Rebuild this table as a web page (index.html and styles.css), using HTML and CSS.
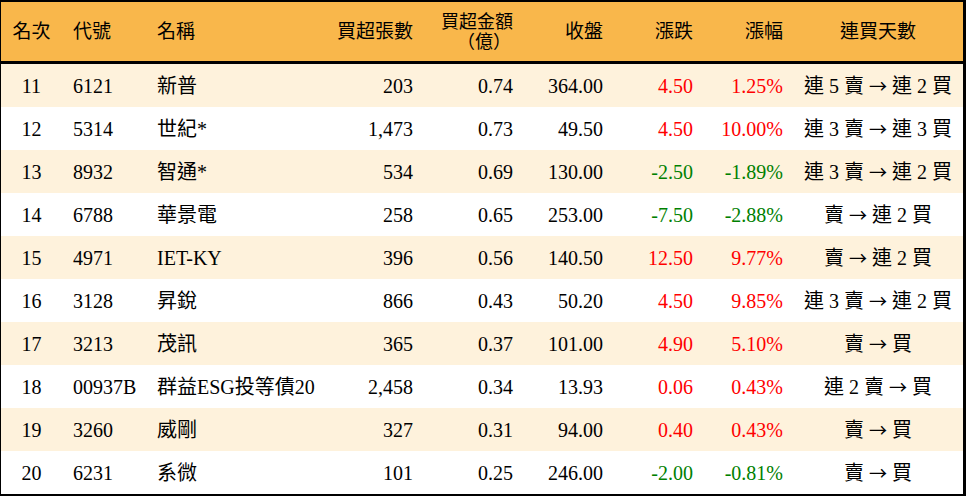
FILE: index.html
```html
<!DOCTYPE html>
<html lang="zh-Hant">
<head>
<meta charset="utf-8">
<title>買超排行</title>
<link rel="stylesheet" href="styles.css">
</head>
<body>
<div class="table">
  <div class="row head">
    <div class="cell center">名次</div>
    <div class="cell left">代號</div>
    <div class="cell left">名稱</div>
    <div class="cell right">買超張數</div>
    <div class="cell right two"><div class="line">買超金額</div><div class="line"><span class="paren open">（</span>億<span class="paren close">）</span></div></div>
    <div class="cell right">收盤</div>
    <div class="cell right">漲跌</div>
    <div class="cell right">漲幅</div>
    <div class="cell center">連買天數</div>
  </div>
  <div class="row odd">
    <div class="cell center">11</div><div class="cell left">6121</div><div class="cell left">新普</div>
    <div class="cell right">203</div><div class="cell right">0.74</div><div class="cell right">364.00</div>
    <div class="cell right up">4.50</div><div class="cell right up">1.25%</div>
    <div class="cell center days">連 5 賣 <span class="arrow">→</span> 連 2 買</div>
  </div>
  <div class="row">
    <div class="cell center">12</div><div class="cell left">5314</div><div class="cell left">世紀*</div>
    <div class="cell right">1,473</div><div class="cell right">0.73</div><div class="cell right">49.50</div>
    <div class="cell right up">4.50</div><div class="cell right up">10.00%</div>
    <div class="cell center days">連 3 賣 <span class="arrow">→</span> 連 3 買</div>
  </div>
  <div class="row odd">
    <div class="cell center">13</div><div class="cell left">8932</div><div class="cell left">智通*</div>
    <div class="cell right">534</div><div class="cell right">0.69</div><div class="cell right">130.00</div>
    <div class="cell right down">-2.50</div><div class="cell right down">-1.89%</div>
    <div class="cell center days">連 3 賣 <span class="arrow">→</span> 連 2 買</div>
  </div>
  <div class="row">
    <div class="cell center">14</div><div class="cell left">6788</div><div class="cell left">華景電</div>
    <div class="cell right">258</div><div class="cell right">0.65</div><div class="cell right">253.00</div>
    <div class="cell right down">-7.50</div><div class="cell right down">-2.88%</div>
    <div class="cell center days">賣 <span class="arrow">→</span> 連 2 買</div>
  </div>
  <div class="row odd">
    <div class="cell center">15</div><div class="cell left">4971</div><div class="cell left">IET-KY</div>
    <div class="cell right">396</div><div class="cell right">0.56</div><div class="cell right">140.50</div>
    <div class="cell right up">12.50</div><div class="cell right up">9.77%</div>
    <div class="cell center days">賣 <span class="arrow">→</span> 連 2 買</div>
  </div>
  <div class="row">
    <div class="cell center">16</div><div class="cell left">3128</div><div class="cell left">昇銳</div>
    <div class="cell right">866</div><div class="cell right">0.43</div><div class="cell right">50.20</div>
    <div class="cell right up">4.50</div><div class="cell right up">9.85%</div>
    <div class="cell center days">連 3 賣 <span class="arrow">→</span> 連 2 買</div>
  </div>
  <div class="row odd">
    <div class="cell center">17</div><div class="cell left">3213</div><div class="cell left">茂訊</div>
    <div class="cell right">365</div><div class="cell right">0.37</div><div class="cell right">101.00</div>
    <div class="cell right up">4.90</div><div class="cell right up">5.10%</div>
    <div class="cell center days">賣 <span class="arrow">→</span> 買</div>
  </div>
  <div class="row">
    <div class="cell center">18</div><div class="cell left">00937B</div><div class="cell left">群益ESG投等債20</div>
    <div class="cell right">2,458</div><div class="cell right">0.34</div><div class="cell right">13.93</div>
    <div class="cell right up">0.06</div><div class="cell right up">0.43%</div>
    <div class="cell center days">連 2 賣 <span class="arrow">→</span> 買</div>
  </div>
  <div class="row odd">
    <div class="cell center">19</div><div class="cell left">3260</div><div class="cell left">威剛</div>
    <div class="cell right">327</div><div class="cell right">0.31</div><div class="cell right">94.00</div>
    <div class="cell right up">0.40</div><div class="cell right up">0.43%</div>
    <div class="cell center days">賣 <span class="arrow">→</span> 買</div>
  </div>
  <div class="row">
    <div class="cell center">20</div><div class="cell left">6231</div><div class="cell left">系微</div>
    <div class="cell right">101</div><div class="cell right">0.25</div><div class="cell right">246.00</div>
    <div class="cell right down">-2.00</div><div class="cell right down">-0.81%</div>
    <div class="cell center days">賣 <span class="arrow">→</span> 買</div>
  </div>
</div>
</body>
</html>
```

FILE: styles.css
```css
html, body {
  margin: 0;
  padding: 0;
  background: #ffffff;
}

body {
  font-family: "Liberation Serif", "Noto Sans CJK TC", serif;
  font-size: 20px;
  color: #000000;
}

.table {
  width: 962px;
  border-top: 2px solid #000;
  border-left: 1px solid #000;
  border-right: 3px solid #000;
  border-bottom: 2px solid #000;
}

.row {
  display: grid;
  grid-template-columns: 61px 84px 184px 93px 100px 90px 90px 90px 170px;
  align-items: center;
  height: 43px;
  background: #ffffff;
}

.row.odd {
  background: #fef2dc;
}

.row.head {
  height: 59px;
  background: #f9b74b;
  border-bottom: 3px solid #000;
  font-size: 19px;
}

.cell {
  line-height: 24px;
  white-space: nowrap;
}

.center {
  text-align: center;
}

.left {
  text-align: left;
  padding-left: 11px;
}

.right {
  text-align: right;
  padding-right: 10px;
}

.head .two {
  font-size: 18px;
  line-height: 20px;
  padding-top: 1px;
}

.paren {
  display: inline-block;
  width: 20px;
}

.paren.open {
  text-align: right;
}

.paren.close {
  text-align: left;
}

.up {
  color: #ff0000;
}

.down {
  color: #008000;
}

.arrow {
  font-family: "Noto Sans CJK TC", sans-serif;
  font-size: 18px;
}
```
